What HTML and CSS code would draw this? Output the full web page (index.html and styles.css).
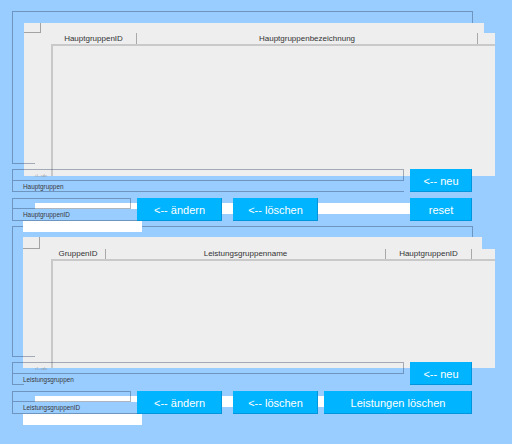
FILE: index.html
```html
<!DOCTYPE html>
<html lang="de">
<head>
<meta charset="utf-8">
<title>Hauptgruppen und Leistungsgruppen</title>
<link rel="stylesheet" href="styles.css">
</head>
<body>
<main class="page">
  <section class="group group--haupt">
    <div class="table-area">
      <div class="frame"></div>
      <div class="panel">
        <div class="panel-top"><div class="corner"></div></div>
        <div class="panel-main">
          <div class="thead thead--haupt">
            <div class="th">HauptgruppenID</div>
            <div class="th">Hauptgruppenbezeichnung</div>
            <div class="th th--fill"></div>
          </div>
          <div class="tbody"></div>
        </div>
      </div>
      <div class="frame-stub"></div>
    </div>
    <div class="controls">
      <div class="field field--wide">
        <div class="field-input"><span class="ghost">ıl‥ıdc</span></div>
        <div class="field-label">Hauptgruppen</div>
      </div>
      <button class="btn btn--neu" type="button">&lt;-- neu</button>
      <div class="strip"></div>
      <div class="field field--small">
        <div class="field-input"></div>
        <div class="field-label">HauptgruppenID</div>
      </div>
      <button class="btn btn--aendern" type="button">&lt;-- ändern</button>
      <button class="btn btn--loeschen" type="button">&lt;-- löschen</button>
      <button class="btn btn--reset" type="button">reset</button>
      <div class="white-rect"></div>
    </div>
  </section>

  <section class="group group--leistung">
    <div class="table-area">
      <div class="frame"></div>
      <div class="panel">
        <div class="panel-top"><div class="corner"></div></div>
        <div class="panel-main">
          <div class="thead thead--leistung">
            <div class="th">GruppenID</div>
            <div class="th">Leistungsgruppenname</div>
            <div class="th">HauptgruppenID</div>
            <div class="th th--fill"></div>
          </div>
          <div class="tbody"></div>
        </div>
      </div>
      <div class="frame-stub"></div>
    </div>
    <div class="controls">
      <div class="field field--wide field--stub">
        <div class="field-input"><span class="ghost">ıl‥ıdc</span></div>
        <div class="field-label">Leistungsgruppen</div>
      </div>
      <button class="btn btn--neu" type="button">&lt;-- neu</button>
      <div class="strip"></div>
      <div class="field field--small">
        <div class="field-input"></div>
        <div class="field-label">LeistungsgruppenID</div>
      </div>
      <button class="btn btn--aendern" type="button">&lt;-- ändern</button>
      <button class="btn btn--loeschen" type="button">&lt;-- löschen</button>
      <button class="btn btn--wide" type="button">Leistungen löschen</button>
      <div class="white-rect"></div>
    </div>
  </section>
</main>
</body>
</html>
```
FILE: styles.css
```css
:root {
  --bg: #99ccff;
  --line: rgba(40, 60, 90, 0.38);
  --panel: #eeeeef;
  --btn: #00b4ff;
}

html, body {
  margin: 0;
  padding: 0;
}

body {
  background: var(--bg);
  font-family: "Liberation Sans", Arial, sans-serif;
  color: #333;
  width: 512px;
  height: 444px;
  overflow: hidden;
}

.page {
  padding-top: 11px;
}

.group--haupt {
  --area-h: 158px;
  --frame-h: 152px;
  --panel-off: 12px;
  --panel-h: 153px;
  --top-h: 10px;
  --top-w: 460px;
  --panel-w: 471px;
  --head-h: 11px;
  --indent: 27px;
  --tail: 5px;
}

.group--leistung {
  --area-h: 136px;
  --frame-h: 130px;
  --panel-off: 11px;
  --panel-h: 131px;
  --top-h: 12px;
  --top-w: 459px;
  --panel-w: 472px;
  --head-h: 10px;
  --indent: 28px;
  --tail: 11px;
}

/* ---------- table area ---------- */
.table-area {
  display: grid;
  grid-template-rows: var(--area-h);
  grid-template-columns: 1fr;
  margin-left: 12px;
}

.table-area > * {
  grid-area: 1 / 1;
  align-self: start;
  justify-self: start;
}

.frame {
  box-sizing: border-box;
  width: 461px;
  height: var(--frame-h);
  border: 1px solid var(--line);
  border-bottom: 0;
}

.frame-stub {
  width: 23px;
  height: 1px;
  background: var(--line);
  margin-top: var(--frame-h);
}

.panel {
  display: flex;
  flex-direction: column;
  height: var(--panel-h);
  margin-left: var(--panel-off);
  margin-top: var(--panel-off);
}

.panel-top {
  width: var(--top-w);
  height: var(--top-h);
  background: var(--panel);
  flex: none;
}

.corner {
  box-sizing: border-box;
  width: 17px;
  height: 100%;
  border-right: 1px solid #a3a3a3;
  border-bottom: 1px solid #a3a3a3;
}

.panel-main {
  flex: 1;
  width: var(--panel-w);
  box-sizing: border-box;
  background: var(--panel);
  padding-left: var(--indent);
  display: flex;
  flex-direction: column;
}

.thead {
  display: grid;
  height: var(--head-h);
  border-bottom: 2px solid #c9c9c9;
  flex: none;
}

.thead--haupt {
  grid-template-columns: 86px 341px 1fr;
}

.thead--leistung {
  grid-template-columns: 55px 280px 86px 1fr;
}

.th {
  font-size: 8px;
  line-height: var(--head-h);
  text-align: center;
  white-space: nowrap;
  color: #333;
  border-right: 1px solid #a9a9a9;
}

.th--fill {
  border-right: 0;
}

.tbody {
  flex: 1;
  border-left: 2px solid #c8c8c8;
}

/* ---------- controls ---------- */
.controls {
  display: grid;
  grid-template-columns: 12px 119px 6px 85px 11px 85px 6px 80px 6px 62px 1fr;
  grid-template-rows: 23px 6px 23px var(--tail);
}

.field {
  display: flex;
  flex-direction: column;
  border-left: 1px solid var(--line);
  box-sizing: border-box;
}

.field--wide {
  grid-column: 2 / 9;
  grid-row: 1;
}

.field--small {
  grid-column: 2 / 4;
  grid-row: 3;
}

.field-input {
  box-sizing: border-box;
  height: 12px;
  border: 1px solid var(--line);
  border-left: 0;
  padding: 4px 0 0 22px;
  flex: none;
}

.field--small .field-input {
  width: 118px;
  height: 11px;
}

.ghost {
  display: block;
  font-size: 4px;
  line-height: 4px;
  color: #8c8c8c;
  letter-spacing: 0.6px;
  white-space: nowrap;
}

.field-label {
  flex: 1;
  display: flex;
  align-items: center;
  padding-left: 10px;
  font-size: 6.4px;
  color: #3a3a3a;
  white-space: nowrap;
  border-bottom: 1px solid var(--line);
}

.field--small .field-label {
  background: var(--bg);
}

.field--stub .field-label {
  border-bottom: 0;
  background: linear-gradient(var(--line), var(--line)) left bottom / 11px 1px no-repeat;
}

.strip {
  grid-column: 2 / 11;
  grid-row: 3;
  align-self: start;
  width: 375px;
  height: 11px;
  margin: 5px 0 0 23px;
  background: #fff;
}

.white-rect {
  grid-column: 2 / 4;
  grid-row: 4;
  align-self: start;
  width: 119px;
  height: 11px;
  margin-left: 11px;
  background: #fff;
  position: relative;
  z-index: 1;
}

.btn {
  margin: 0;
  padding: 0;
  border: 0;
  background: var(--btn);
  color: #fff;
  font-family: "Liberation Sans", Arial, sans-serif;
  font-size: 11px;
  box-shadow: inset -1px -1px 0 rgba(0, 70, 130, 0.28);
  white-space: nowrap;
}

.btn--neu {
  grid-column: 10 / 11;
  grid-row: 1;
}

.btn--aendern {
  grid-column: 4 / 5;
  grid-row: 3;
}

.btn--loeschen {
  grid-column: 6 / 7;
  grid-row: 3;
}

.btn--reset {
  grid-column: 10 / 11;
  grid-row: 3;
}

.btn--wide {
  grid-column: 8 / 11;
  grid-row: 3;
}
```
